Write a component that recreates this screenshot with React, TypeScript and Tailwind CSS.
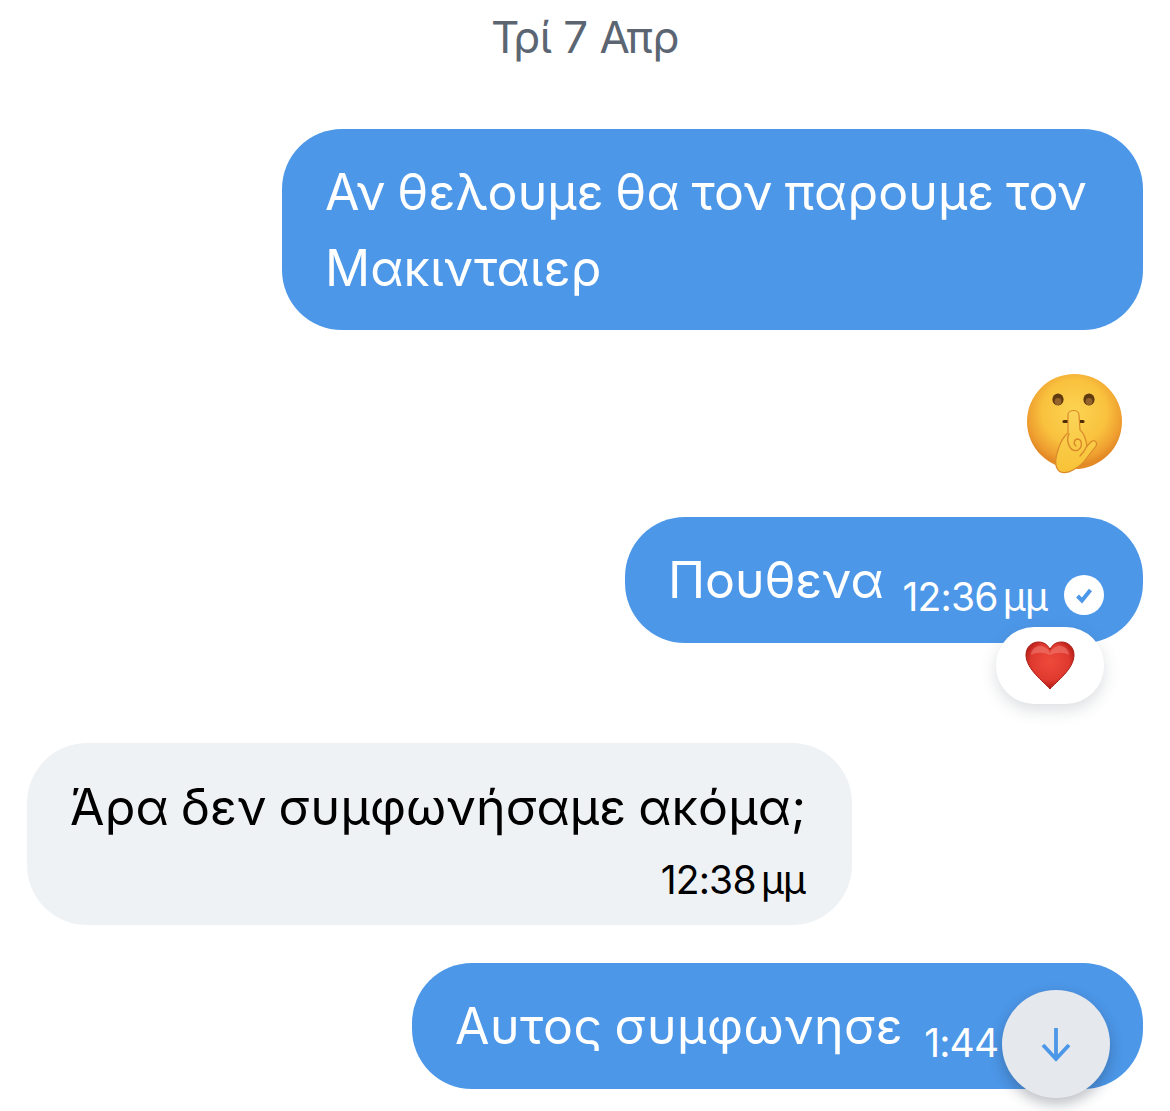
import React from 'react';

const font = { fontFamily: 'Inter, "Noto Sans", sans-serif' };

const ShushEmoji = () => (
  <svg width="98" height="100" viewBox="0 0 98 100">
    <defs>
      <radialGradient id="face" cx="50%" cy="40%" r="56%">
        <stop offset="0%" stopColor="#fcd452" />
        <stop offset="60%" stopColor="#f9c23e" />
        <stop offset="88%" stopColor="#ef9f30" />
        <stop offset="100%" stopColor="#e38a26" />
      </radialGradient>
      <linearGradient id="hand" x1="0" y1="0" x2="0" y2="1">
        <stop offset="0%" stopColor="#fbd55a" />
        <stop offset="100%" stopColor="#f8c236" />
      </linearGradient>
    </defs>
    <circle cx="48.5" cy="47.5" r="47.5" fill="url(#face)" />
    <ellipse cx="32" cy="25.5" rx="5.6" ry="6" fill="#5f3a10" />
    <ellipse cx="63" cy="25.5" rx="5.6" ry="6" fill="#5f3a10" />
    <ellipse cx="32" cy="27.5" rx="3.4" ry="3.4" fill="#94642a" />
    <ellipse cx="63" cy="27.5" rx="3.4" ry="3.4" fill="#94642a" />
    <path d="M38 47.5 h4 M53 47.5 h4" stroke="#4f2d08" strokeWidth="3.2" strokeLinecap="round" />
    <path
      d="M42 41 C42 35 53 35 53 41 L54 56 C58 59 60 66 61 72 L65 68 C68 65 72 68 70 72 L60 85 C56 91 52 93 47 96 C42 99 35 100 32 96 C28 91 30 82 32 76 C34 69 37 63 42 59 Z"
      fill="url(#hand)"
      stroke="#d9892a"
      strokeWidth="1.2"
    />
    <path d="M43 60 C39 68 45 79 52 76 C57 73 56 66 52 65 C48 65 47 70 50 72" fill="none" stroke="#d9892a" strokeWidth="1.4" strokeLinecap="round" />
    <path d="M61 72 C59 76 57 79 54 82" fill="none" stroke="#d9892a" strokeWidth="1.4" strokeLinecap="round" />
  </svg>
);

const Heart = () => (
  <svg width="50" height="50" viewBox="0 0 50 50">
    <defs>
      <radialGradient id="heart" cx="50%" cy="42%" r="60%">
        <stop offset="0%" stopColor="#ee4a3a" />
        <stop offset="65%" stopColor="#e03a30" />
        <stop offset="100%" stopColor="#a81410" />
      </radialGradient>
    </defs>
    <path
      d="M25 48 C19 41 1 28 1 14 C1 6 7 1 13.5 1 C19 1 23 4 25 8.5 C27 4 31 1 36.5 1 C43 1 49 6 49 14 C49 28 31 41 25 48 Z"
      fill="url(#heart)"
      stroke="#a81c14"
      strokeWidth="1"
    />
    <path d="M6 14 C6 8 12 4 17 5 C24 7 25 12 25 14 C18 11 11 11 6 14 Z" fill="#f58d84" opacity="0.45" />
    <path d="M44 14 C44 8 38 4 33 5 C26 7 25 12 25 14 C32 11 39 11 44 14 Z" fill="#f58d84" opacity="0.45" />
  </svg>
);

const SentCheck = () => (
  <svg width="40" height="40" viewBox="0 0 40 40" className="shrink-0">
    <circle cx="20" cy="20" r="20" fill="#ffffff" />
    <path d="M13.5 21 L18 25.5 L26.5 15" fill="none" stroke="#4c97e8" strokeWidth="4" />
  </svg>
);

export default function App() {
  return (
    <div className="relative h-[1111px] overflow-hidden bg-white px-[27px]" style={font}>
      <div className="flex h-[74px] items-center justify-center text-[44px] tracking-[-0.5px] text-[#5b6672]">
        Τρί 7 Απρ
      </div>

      <div className="mt-[55px] flex justify-end">
        <div className="h-[201px] w-[861px] rounded-[60px] bg-[#4c97e8] pl-[43px] pt-[25px] text-[50px] leading-[76px] tracking-[0.1px] text-white [word-spacing:-2.5px]">
          Αν θελουμε θα τον παρουμε τον
          <br />
          Μακινταιερ
        </div>
      </div>

      <div className="mt-[44px] flex justify-end pr-[19px]">
        <ShushEmoji />
      </div>

      <div className="relative mt-[43px] flex justify-end">
        <div className="flex h-[126px] w-[518px] items-center rounded-[60px] bg-[#4c97e8] pl-[43px] text-white">
          <span className="text-[50px] tracking-[-0.1px]">Πουθενα</span>
          <span className="ml-[19px] mt-[34px] w-[143px] whitespace-nowrap text-[39px] tracking-[-0.8px] [word-spacing:-5px]">12:36 μμ</span>
          <span className="ml-[18px] mt-[30px]">
            <SentCheck />
          </span>
        </div>
        <div className="absolute right-[39px] top-[110px] flex h-[77px] w-[108px] items-center justify-center rounded-[38px] bg-white shadow-[0_6px_16px_rgba(60,70,90,0.18)]">
          <Heart />
        </div>
      </div>

      <div className="mt-[100px] flex justify-start">
        <div className="h-[182px] w-[825px] rounded-[60px] bg-[#eff2f4] pl-[43px] pr-[47px] pt-[30px] text-black">
          <div className="whitespace-nowrap text-[50px] leading-[68px] tracking-[0.2px] [word-spacing:-2.5px]">Άρα δεν συμφωνήσαμε ακόμα;</div>
          <div className="mt-[16px] text-right text-[39px] leading-[46px] tracking-[-0.8px] [word-spacing:-5px]">12:38 μμ</div>
        </div>
      </div>

      <div className="mt-[38px] flex justify-end">
        <div className="flex h-[126px] w-[731px] items-center overflow-hidden rounded-[60px] bg-[#4c97e8] pl-[43px] text-white">
          <span className="whitespace-nowrap text-[50px] tracking-[0.5px] [word-spacing:-2.5px]">Αυτος συμφωνησε</span>
          <span className="ml-[21px] mt-[34px] whitespace-nowrap text-[39px] tracking-[-0.8px] [word-spacing:-5px]">1:44 μμ</span>
        </div>
      </div>

      <button className="absolute left-[1002px] top-[990px] flex h-[108px] w-[108px] items-center justify-center rounded-full bg-[#e5e8ec] shadow-[0_6px_14px_rgba(30,40,60,0.3)]">
        <svg width="32" height="36" viewBox="0 0 32 36">
          <path d="M16 2 V33 M3 19 L16 33 L29 19" fill="none" stroke="#4c97e8" strokeWidth="3.8" />
        </svg>
      </button>
    </div>
  );
}
